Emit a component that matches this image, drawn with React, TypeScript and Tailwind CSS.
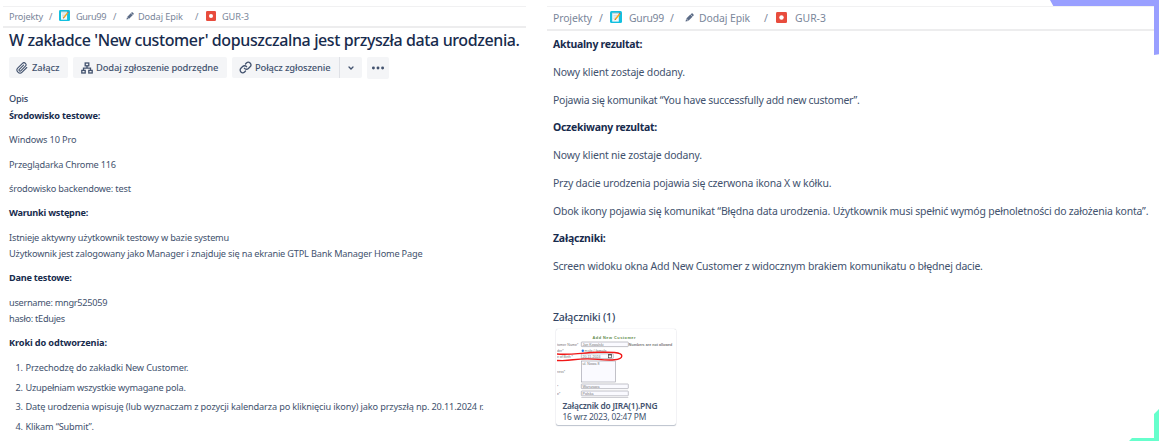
import type { ReactNode } from 'react';

function Pencil({ className }: { className: string }) {
  return (
    <svg viewBox="0 0 9 9" className={className} fill="#5b6b86">
      <path d="M0.5 8.5 1.1 5.9 3.1 7.9Z" />
      <path d="M1.3 5.5 5.3 1.5 7.5 3.7 3.5 7.7Z" />
      <path d="M5.6 1.2 6.6.4Q7.1 0 7.6.5L8.5 1.4Q9 1.9 8.6 2.4L7.8 3.4Z" />
    </svg>
  );
}

function ProjectAvatar({ className }: { className: string }) {
  return (
    <svg viewBox="0 0 12 12" className={className}>
      <rect width="12" height="12" rx="1.5" fill="#12c0e0" />
      <path d="M2.2 2H8.8V10.6H2.2Z" fill="#f3f8fa" />
      <path d="M2.2 1.6H8.8V2.6H2.2Z" fill="#a8c4cc" />
      <path d="M3.4 4.4H7.4M3.4 6H6.4M3.4 7.6H5.6" stroke="#b4c8d0" strokeWidth=".6" />
      <path d="M4.6 9.2 5 7.4 9 2.4 10.2 3.4 6.2 8.4Z" fill="#f5a623" />
      <path d="M9 2.4 9.6 1.7 10.7 2.7 10.2 3.4Z" fill="#e5484d" />
      <path d="M4.6 9.2 5 7.9 5.7 8.6Z" fill="#4a3b2a" />
    </svg>
  );
}

function BugIcon({ className }: { className: string }) {
  return (
    <svg viewBox="0 0 12 12" className={className}>
      <rect width="12" height="12" rx="1.5" fill="#e84c3d" />
      <circle cx="6" cy="6" r="2.4" fill="#fff" />
    </svg>
  );
}

function SmallBreadcrumbs() {
  return (
    <nav className="ml-[3px] mt-[6px] flex h-[22px] w-[523px] items-center whitespace-nowrap border-b-2 border-t border-b-[#ededee] border-t-[#f1f1f2] pl-[6px] text-[9.2px] text-[#7a869a]">
      <span className="w-[40px] tracking-[-0.15px]">Projekty</span>
      <span className="w-[10px]">/</span>
      <ProjectAvatar className="mb-[2px] size-[11px]" />
      <span className="ml-[6px] w-[37px] tracking-[-0.38px]">Guru99</span>
      <span className="w-[13px]">/</span>
      <Pencil className="mb-[2px] size-[8px]" />
      <span className="ml-[4px] w-[57px] tracking-[-0.1px]">Dodaj Epik</span>
      <span className="w-[11px]">/</span>
      <BugIcon className="mb-[2px] size-[10px]" />
      <span className="ml-[6px] tracking-[-0.07px]">GUR-3</span>
    </nav>
  );
}

function LargeBreadcrumbs() {
  return (
    <nav className="mt-[6px] flex h-[25px] w-[607px] items-center whitespace-nowrap border-b-2 border-t border-b-[#ededee] border-t-[#f1f1f2] pl-[6px] pt-px text-[10.4px] text-[#7a869a]">
      <span className="w-[46px] tracking-[-0.1px]">Projekty</span>
      <span className="w-[11px]">/</span>
      <ProjectAvatar className="mb-[3px] size-[12px]" />
      <span className="ml-[7px] w-[41px] tracking-[-0.28px]">Guru99</span>
      <span className="w-[15px]">/</span>
      <Pencil className="mb-[3px] size-[9px]" />
      <span className="ml-[5px] w-[65px] tracking-[-0.08px]">Dodaj Epik</span>
      <span className="w-[12px]">/</span>
      <BugIcon className="mb-[3px] size-[11px]" />
      <span className="ml-[8px]">GUR-3</span>
    </nav>
  );
}

function Toolbar() {
  return (
    <div className="mt-[6px] flex h-[22px] items-start whitespace-nowrap pl-[9px] text-[9.4px] font-medium text-[#42526e]">
      <button className="flex h-[21px] w-[58.5px] items-center rounded-[2px] bg-[#f4f5f7] pl-[7px]">
        <svg viewBox="0 0 24 24" className="size-[12px]" fill="none" stroke="currentColor" strokeWidth="2.2" strokeLinecap="round" strokeLinejoin="round">
          <path d="M21.5 11 12.3 20.2a6 6 0 0 1-8.5-8.5L13 2.6a4.1 4.1 0 0 1 5.8 5.8l-9.2 9.2a2 2 0 0 1-2.9-2.9l8.4-8.4" />
        </svg>
        <span className="ml-[4px] pt-[1.5px] tracking-[-0.05px]">Załącz</span>
      </button>
      <button className="ml-[5.5px] flex h-[21px] w-[154px] items-center rounded-[2px] bg-[#f4f5f7] pl-[7.5px]">
        <svg viewBox="0 0 12 12" className="size-[12px]" fill="none" stroke="currentColor" strokeWidth="1.3">
          <rect x="4.2" y="1" width="3.6" height="2.8" />
          <rect x=".8" y="8.4" width="3.4" height="2.6" />
          <rect x="7.8" y="8.4" width="3.4" height="2.6" />
          <path d="M6 3.8V6.1M2.5 8.4V6.1H9.5V8.4" />
        </svg>
        <span className="ml-[3.5px] pt-[1.5px] tracking-[-0.15px]">Dodaj zgłoszenie podrzędne</span>
      </button>
      <div className="ml-[5px] flex h-[21px] rounded-[2px] bg-[#f4f5f7]">
        <button className="flex w-[107px] items-center pl-[7px]">
          <svg viewBox="0 0 24 24" className="size-[13px]" fill="none" stroke="currentColor" strokeWidth="2.4" strokeLinecap="round">
            <path d="M10 13.5a5 5 0 0 0 7.3.3l3.2-3.2a4.8 4.8 0 0 0-6.8-6.8L12 5.5" />
            <path d="M14 10.5a5 5 0 0 0-7.3-.3l-3.2 3.2a4.8 4.8 0 0 0 6.8 6.8L12 18.5" />
          </svg>
          <span className="ml-[3px] pt-[1.5px] tracking-[-0.13px]">Połącz zgłoszenie</span>
        </button>
        <button className="flex w-[22.5px] items-center justify-center border-l border-[#dfe1e6]">
          <svg viewBox="0 0 6 4" className="h-[4px] w-[6px]" fill="none" stroke="currentColor" strokeWidth="1.3" strokeLinecap="round">
            <path d="M1 1 3 3 5 1" />
          </svg>
        </button>
      </div>
      <button className="ml-[5px] flex h-[22px] w-[22px] items-center justify-center rounded-[2px] bg-[#f4f5f7]">
        <svg viewBox="0 0 14 4" className="h-[4px] w-[14px]" fill="currentColor">
          <circle cx="2.4" cy="2" r="1.45" />
          <circle cx="7" cy="2" r="1.45" />
          <circle cx="11.6" cy="2" r="1.45" />
        </svg>
      </button>
    </div>
  );
}

function Step({ n, children }: { n: number; children: ReactNode }) {
  return (
    <li className="flex">
      <span className="w-[10px]">{n}.</span>
      {children}
    </li>
  );
}

function Description() {
  return (
    <section className="mt-[12.1px] whitespace-nowrap pl-[9px] text-[9.2px] leading-[16.25px] tracking-[-0.19px] text-[#42526e]">
      <h2 className="font-medium text-[#344563]">Opis</h2>
      <div className="mt-[.5px] flex flex-col gap-[8.15px]">
        <p className="font-bold text-[#172b4d]">Środowisko testowe:</p>
        <p className="tracking-[-0.13px]">Windows 10 Pro</p>
        <p className="tracking-[-0.21px]">Przeglądarka Chrome 116</p>
        <p>środowisko backendowe: test</p>
        <p className="font-bold tracking-[-0.24px] text-[#172b4d]">Warunki wstępne:</p>
        <p>
          Istnieje aktywny użytkownik testowy w bazie systemu
          <br />
          <span className="tracking-[-0.183px]">
            Użytkownik jest zalogowany jako Manager i znajduje się na ekranie GTPL Bank Manager Home Page
          </span>
        </p>
        <p className="font-bold tracking-[-0.24px] text-[#172b4d]">Dane testowe:</p>
        <p className="tracking-[-0.28px]">
          username: mngr525059
          <br />
          hasło: tEdujes
        </p>
        <p className="font-bold tracking-[-0.13px] text-[#172b4d]">Kroki do odtworzenia:</p>
        <ol className="flex flex-col gap-[3.3px] pl-[6.5px] pt-[.4px]">
          <Step n={1}>
            <span className="tracking-[-0.14px]">Przechodzę do zakładki New Customer.</span>
          </Step>
          <Step n={2}>
            <span className="tracking-[-0.23px]">Uzupełniam wszystkie wymagane pola.</span>
          </Step>
          <Step n={3}>
            <span className="tracking-[-0.15px]">
              Datę urodzenia wpisuję (lub wyznaczam z pozycji kalendarza po kliknięciu ikony) jako przyszłą np. 20.11.2024 r.
            </span>
          </Step>
          <Step n={4}>
            <span>Klikam “Submit”.</span>
          </Step>
        </ol>
      </div>
    </section>
  );
}

function FormPreview() {
  return (
    <svg viewBox="557 330 119 68" className="block h-[68px] w-[119px]" fontFamily="Liberation Sans, sans-serif" fontSize="3.6" letterSpacing="0">
      <rect x="557" y="330" width="119" height="68" fill="#fff" />
      <text x="592.5" y="338.6" textLength="43" fontWeight="700" fontSize="3.9" fill="#5d8a48">Add New Customer</text>
      <g fill="#777">
        <text x="557" y="346" textLength="21.5">tomer Name*</text>
        <text x="557" y="352">der*</text>
        <text x="557" y="357.8" textLength="16">e of Birth *</text>
        <text x="557" y="372.6">ress*</text>
        <text x="557" y="387.6">*</text>
        <text x="557" y="394.8">e*</text>
      </g>
      <g fill="#fafaff" stroke="#9a9aa5" strokeWidth=".6">
        <rect x="581.3" y="342" width="47" height="4.6" rx=".6" />
        <rect x="581.3" y="353.8" width="32" height="4.8" rx=".6" />
        <rect x="581.3" y="361" width="34.3" height="21" />
        <rect x="581.3" y="384" width="47" height="4.6" rx=".6" />
        <rect x="581.3" y="391" width="47" height="4.8" rx=".6" />
        <path d="M581.3 397.7H628.3" />
      </g>
      <g fill="#777">
        <text x="582.5" y="345.8" textLength="21">Jan Kowalski</text>
        <text x="584.6" y="352" textLength="22">male / female</text>
        <text x="582.5" y="357.8" textLength="18">20.11.2024</text>
        <text x="582.5" y="364.6" textLength="17">ul. Nowa 8</text>
        <text x="582.5" y="387.6" textLength="17">Warszawa</text>
        <text x="582.5" y="394.8" textLength="11">Polska</text>
        <text x="628.8" y="345.8" textLength="43.5" fontWeight="700">Numbers are not allowed</text>
      </g>
      <circle cx="582.8" cy="350.7" r="1.2" fill="#1976e8" />
      <rect x="608.3" y="354.8" width="3.2" height="3" fill="#fff" stroke="#333" strokeWidth=".6" />
      <path d="M608 354.8H612" stroke="#333" strokeWidth=".9" />
      <path d="M556 354C572 355.2 582 352.6 598 352.3C610 352 622 351.8 621.8 356C621.6 360.6 610 360.4 598 359.4C588 358.4 581 358.8 573 359.8C567 360.8 562 360.8 556 360.4" fill="none" stroke="#f01818" strokeWidth="1.4" />
    </svg>
  );
}

function Results() {
  return (
    <section className="whitespace-nowrap pl-[6px] text-[10.45px] leading-[27.7px] tracking-[-0.19px] text-[#42526e]">
      <p className="mt-[.3px] font-bold tracking-[-0.25px] text-[#172b4d]">Aktualny rezultat:</p>
      <p className="tracking-[-0.166px]">Nowy klient zostaje dodany.</p>
      <p className="tracking-[-0.24px]">Pojawia się komunikat “You have successfully add new customer”.</p>
      <p className="font-bold tracking-[-0.26px] text-[#172b4d]">Oczekiwany rezultat:</p>
      <p className="tracking-[-0.166px]">Nowy klient nie zostaje dodany.</p>
      <p>Przy dacie urodzenia pojawia się czerwona ikona X w kółku.</p>
      <p className="tracking-[-0.185px]">
        Obok ikony pojawia się komunikat “Błędna data urodzenia. Użytkownik musi spełnić wymóg pełnoletności do założenia konta”.
      </p>
      <p className="font-bold text-[#172b4d]">Załączniki:</p>
      <p>Screen widoku okna Add New Customer z widocznym brakiem komunikatu o błędnej dacie.</p>
      <h2 className="mt-[22.9px] font-medium tracking-[-0.15px] text-[#344563]">Załączniki (1)</h2>
      <figure className="-mt-[2.5px] ml-[3px] h-[96px] w-[120px] overflow-hidden rounded-[2px] bg-white px-px pt-px shadow-[0_0_1px_rgba(9,30,66,0.3),0_1px_1px_rgba(9,30,66,0.25)]">
        <FormPreview />
        <figcaption className="mt-[2px] pl-[5.5px] text-[8.4px] leading-[11px]">
          <p className="font-semibold tracking-[-0.21px] text-[#42526e]">Załącznik do JIRA(1).PNG</p>
          <p className="tracking-[-0.2px]">16 wrz 2023, 02:47 PM</p>
        </figcaption>
      </figure>
    </section>
  );
}

export default function App() {
  return (
    <main className="relative flex h-[441px] w-[1159px] overflow-hidden bg-white font-['Noto_Sans',sans-serif]">
      <div className="w-[547px] shrink-0">
        <SmallBreadcrumbs />
        <h1 className="mt-[2px] whitespace-nowrap pl-[9px] text-[16px] font-medium leading-[21px] tracking-[-0.39px] text-[#172b4d]">
          W zakładce 'New customer' dopuszczalna jest przyszła data urodzenia.
        </h1>
        <Toolbar />
        <Description />
      </div>
      <div className="w-[607px] shrink-0">
        <LargeBreadcrumbs />
        <Results />
      </div>
      <svg viewBox="0 0 109 55" className="absolute right-0 top-0 h-[55px] w-[109px]" fill="#999fff">
        <path d="M0 0H109V54.3L104 55V6H3.3Z" />
      </svg>
      <svg viewBox="0 0 30 32" className="absolute bottom-0 right-0 h-[32px] w-[30px]" fill="#66ffcc">
        <path d="M30 0V32H0L3 29H25V5Z" />
      </svg>
    </main>
  );
}
